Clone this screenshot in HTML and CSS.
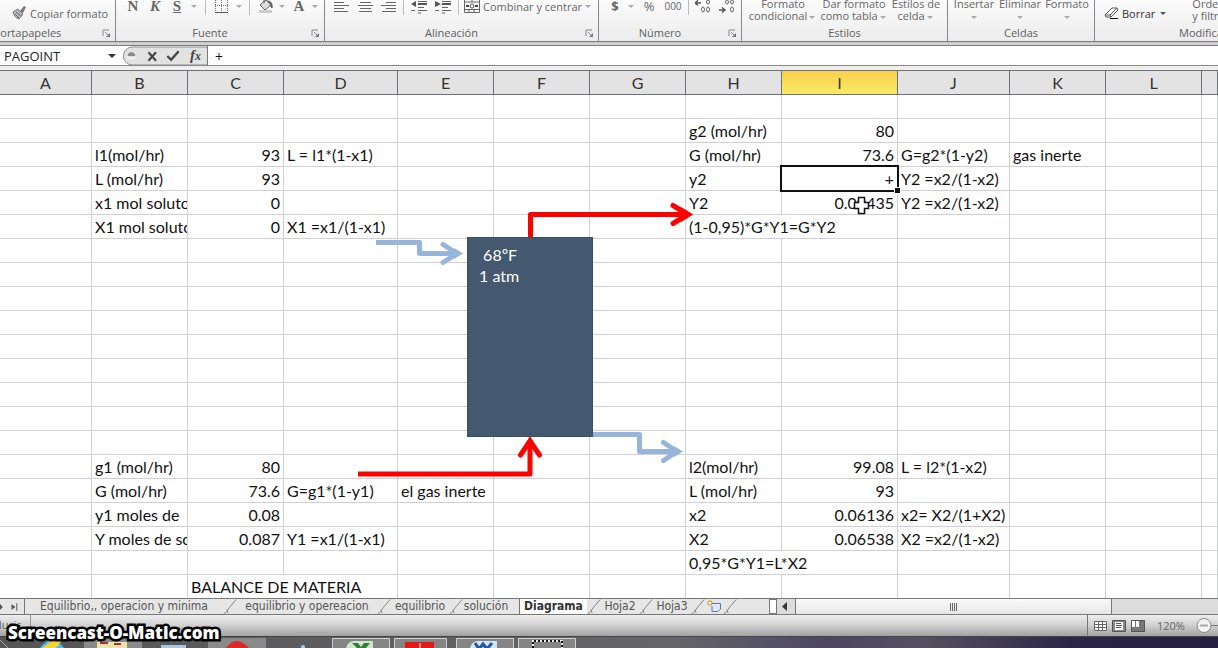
FILE: index.html
```html
<!DOCTYPE html>
<html lang="es">
<head>
<meta charset="utf-8">
<title>Balance de materia</title>
<link rel="stylesheet" href="styles.css">
</head>
<body>
<svg class="defs" aria-hidden="true">
  <defs>
    <symbol id="launcher" viewBox="0 0 9 9"><path d="M1 7V1h6" fill="none" stroke="#85888c"/><path d="M3 3l3 3" stroke="#85888c"/><path d="M8 4v4H4z" fill="#75787c"/></symbol>
    <symbol id="slash" viewBox="0 0 14 17"><path d="M0 16L14 0V16z" fill="#e6e6e6"/><path d="M0 16.500C3 16 4 13 6 10L14 .5" fill="none" stroke="#777"/><path d="M3 12l2 4" stroke="#888"/></symbol>
  </defs>
</svg>

<header class="ribbon">
  <section class="group g-clip">
    <div class="tools"><button class="wide"><svg width="16" height="16" viewBox="0 0 16 16"><path d="M9 6L13 1l2 1-3 6z" fill="#777"/><path d="M2 7l5-3 5 5-4 5C5 13 3 11 2 7z" fill="#b9b9b9" stroke="#777"/><path d="M5 7l5 4M4 9l4 4" stroke="#666"/></svg>Copiar formato</button></div>
    <h2>Portapapeles</h2><svg class="launch"><use href="#launcher"/></svg>
  </section>
  <section class="group g-font">
    <div class="tools">
      <button class="w22 serif">N</button><button class="w22 serif italic">K</button><button class="w22 serif under">S</button><i class="arrow w12"></i><i class="sep w10"></i>
      <button class="w24" aria-label="Bordes"><svg width="14" height="16" viewBox="0 0 14 16"><path d="M.5 0V14M6.500 0V14M12.500 0V14M0 1.500H14M0 7.500H14" stroke="#777" stroke-dasharray="1 1"/><path d="M0 14.500H13" stroke="#555"/></svg></button><i class="arrow w10"></i><i class="sep w10"></i>
      <button class="w24" aria-label="Relleno"><svg width="16" height="16" viewBox="0 0 16 16"><path d="M2 7l6-5 5 5-6 5z" fill="#ddd" stroke="#666"/><path d="M6 5V1M9 3q6 0 5 7l-2-3" stroke="#555" fill="#777"/><path d="M1 13.500H14" stroke="#ccc" stroke-width="3"/></svg></button><i class="arrow w8"></i>
      <button class="w26 serif">A</button><i class="arrow w6"></i>
    </div>
    <h2>Fuente</h2><svg class="launch"><use href="#launcher"/></svg>
  </section>
  <section class="group g-align">
    <div class="tools">
      <button class="w24" aria-label="Izquierda"><svg width="15" height="14" viewBox="0 0 15 14"><path d="M0 .5H15M0 3.500H10M0 6.500H15M0 9.500H10M0 12.500H14" stroke="#666"/></svg></button>
      <button class="w24" aria-label="Centro"><svg width="15" height="14" viewBox="0 0 15 14"><path d="M0 .5H15M2 3.500H13M0 6.500H15M2 9.500H13M1 12.500H14" stroke="#666"/></svg></button>
      <button class="w22" aria-label="Derecha"><svg width="15" height="14" viewBox="0 0 15 14"><path d="M0 .5H15M5 3.500H15M0 6.500H15M5 9.500H15M1 12.500H15" stroke="#666"/></svg></button><i class="sep w8"></i>
      <button class="w24" aria-label="Disminuir sangría"><svg width="16" height="15" viewBox="0 0 16 15"><path d="M7 2.500H16M7 8.500H13M0 11.500H4M7 11.500H16M7 14H10" stroke="#666"/><path d="M7 5H16" stroke="#555" stroke-width="2"/><path d="M5 2v6L0 5z" fill="#555"/></svg></button>
      <button class="w24" aria-label="Aumentar sangría"><svg width="16" height="15" viewBox="0 0 16 15"><path d="M7 2.500H16M7 8.500H13M0 11.500H4M7 11.500H16M7 14H10" stroke="#666"/><path d="M7 5H16" stroke="#555" stroke-width="2"/><path d="M0 2v6L6 5z" fill="#555"/></svg></button><i class="sep w6"></i>
      <button class="w22" aria-label="Celdas"><svg width="16" height="14" viewBox="0 0 16 14"><path d="M.5 0V13.500H15.500V0M0 3H16M0 10.500H16M8 0V3M5 11v2M10 11v2" fill="none" stroke="#666"/><path d="M2 7h3M11 7h3" stroke="#444" stroke-width="2"/><circle cx="8" cy="7" r="2" fill="none" stroke="#555"/></svg></button>
      <button class="label">Combinar y centrar</button><i class="arrow w12"></i>
    </div>
    <h2>Alineación</h2><svg class="launch"><use href="#launcher"/></svg>
  </section>
  <section class="group g-num">
    <div class="tools">
      <button class="w20 big bold">$</button><i class="arrow w12"></i><button class="w24 big">%</button><button class="w24 mil">000</button><i class="sep w6"></i>
      <button class="w24" aria-label="Aumentar decimales"><svg width="16" height="14" viewBox="0 0 16 14"><path d="M0 4H6M3 1.500L0 4l3 2.500" stroke="#555" fill="none" stroke-width="1.500"/><g fill="none" stroke="#666"><ellipse cx="13" cy="3" rx="1.500" ry="2"/><ellipse cx="8" cy="10.500" rx="1.500" ry="2.500"/><ellipse cx="13" cy="10.500" rx="1.500" ry="2.500"/></g></svg></button>
      <button class="w24" aria-label="Disminuir decimales"><svg width="16" height="14" viewBox="0 0 16 14"><path d="M0 11H6M3 8.500L6 11l-3 2.500" stroke="#555" fill="none" stroke-width="1.500"/><g fill="none" stroke="#666"><ellipse cx="8" cy="3" rx="1.500" ry="2"/><ellipse cx="13" cy="3" rx="1.500" ry="2"/><ellipse cx="13" cy="10.500" rx="1.500" ry="2.500"/></g></svg></button>
    </div>
    <h2>Número</h2><svg class="launch"><use href="#launcher"/></svg>
  </section>
  <section class="group g-style">
    <div class="tools tall">
      <button class="two w74">Formato<br>condicional<i class="arrow w10"></i></button>
      <button class="two w68">Dar formato<br>como tabla<i class="arrow w10"></i></button>
      <button class="two w56">Estilos de<br>celda<i class="arrow w10"></i></button>
    </div>
    <h2>Estilos</h2>
  </section>
  <section class="group g-cells">
    <div class="tools tall">
      <button class="two w48">Insertar<br><i class="arrow w12"></i></button>
      <button class="two w44">Eliminar<br><i class="arrow w12"></i></button>
      <button class="two w50">Formato<br><i class="arrow w12"></i></button>
    </div>
    <h2>Celdas</h2>
  </section>
  <section class="group g-edit">
    <div class="tools tall">
      <button class="wide dark"><svg width="15" height="12" viewBox="0 0 15 12"><path d="M1 8L8 1h5l1 2-7 7H2z" fill="#fff" stroke="#555"/><path d="M1 8h5l7-7M6 8l1 2" fill="none" stroke="#555"/><path d="M6 11.500h8" stroke="#111"/></svg>Borrar<i class="arrow w10 strong"></i></button>
      <button class="two left">Ordenar<br>y filtrar</button>
    </div>
    <h2>Modificar</h2>
  </section>
</header>

<div class="formula">
  <input class="name" aria-label="Cuadro de nombres" value="PAGOINT">
  <i class="arrow w12 black"></i>
  <div class="fx">
    <svg width="90" height="20" viewBox="0 0 90 20"><path d="M90 .5H11a9.500 9.500 0 000 19H90" fill="#e2e2e2" stroke="#888"/><path d="M6 10a4 4 0 018 0z" fill="#8b8b8b"/><path d="M5 11q5 4 10 0" fill="none" stroke="#fff"/><path d="M28 6l8 9M36 6l-8 9" stroke="#444" stroke-width="2.200"/><path d="M48 10l4 4 8-9" fill="none" stroke="#444" stroke-width="2.500"/></svg>
    <span class="fn">f<small>x</small></span>
  </div>
  <input class="edit" aria-label="Barra de fórmulas" value="+">
</div>

<main class="sheet">
<table>
<colgroup><col class="cA"><col class="c96"><col class="c96"><col class="cD"><col class="c96"><col class="c96"><col class="c96"><col class="c96"><col class="cI"><col class="cJ"><col class="c96"><col class="c96"><col></colgroup>
<thead><tr><th>A<th>B<th>C<th>D<th>E<th>F<th>G<th>H<th class="on">I<th>J<th>K<th>L<th></tr></thead>
<tbody>
<tr><td><td><td><td><td><td><td><td><td><td><td><td><td></tr>
<tr><td><td><td><td><td><td><td><td>g2 (mol/hr)<td class="n">80<td><td><td><td></tr>
<tr><td><td>l1(mol/hr)<td class="n">93<td>L = l1*(1-x1)<td><td><td><td>G (mol/hr)<td class="n">73.6<td>G=g2*(1-y2)<td>gas inerte<td><td></tr>
<tr><td><td>L (mol/hr)<td class="n">93<td><td><td><td><td>y2<td class="n active"><input aria-label="I4" value="+"><td>Y2 =x2/(1-x2)<td><td><td></tr>
<tr><td><td>x1 mol soluto<td class="n">0<td><td><td><td><td>Y2<td class="n">0.00435<td>Y2 =x2/(1-x2)<td><td><td></tr>
<tr><td><td>X1 mol soluto<td class="n">0<td>X1 =x1/(1-x1)<td><td><td><td colspan="2">(1-0,95)*G*Y1=G*Y2<td><td><td><td></tr>
<tr><td><td><td><td><td><td><td><td><td><td><td><td><td></tr>
<tr><td><td><td><td><td><td><td><td><td><td><td><td><td></tr>
<tr><td><td><td><td><td><td><td><td><td><td><td><td><td></tr>
<tr><td><td><td><td><td><td><td><td><td><td><td><td><td></tr>
<tr><td><td><td><td><td><td><td><td><td><td><td><td><td></tr>
<tr><td><td><td><td><td><td><td><td><td><td><td><td><td></tr>
<tr><td><td><td><td><td><td><td><td><td><td><td><td><td></tr>
<tr><td><td><td><td><td><td><td><td><td><td><td><td><td></tr>
<tr><td><td><td><td><td><td><td><td><td><td><td><td><td></tr>
<tr><td><td>g1 (mol/hr)<td class="n">80<td><td><td><td><td>l2(mol/hr)<td class="n">99.08<td>L = l2*(1-x2)<td><td><td></tr>
<tr><td><td>G (mol/hr)<td class="n">73.6<td>G=g1*(1-y1)<td>el gas inerte<td><td><td>L (mol/hr)<td class="n">93<td><td><td><td></tr>
<tr><td><td>y1 moles de<td class="n">0.08<td><td><td><td><td>x2<td class="n">0.06136<td>x2= X2/(1+X2)<td><td><td></tr>
<tr><td><td>Y moles de soluto<td class="n">0.087<td>Y1 =x1/(1-x1)<td><td><td><td>X2<td class="n">0.06538<td>X2 =x2/(1-x2)<td><td><td></tr>
<tr><td><td><td><td><td><td><td><td colspan="2">0,95*G*Y1=L*X2<td><td><td><td></tr>
<tr><td><td><td colspan="2">BALANCE DE MATERIA<td><td><td><td><td><td><td><td><td></tr>
</tbody>
</table>
<svg class="diagram" width="900" height="420" viewBox="0 70 900 420" fill="none">
  <rect x="467.500" y="237.500" width="125" height="199" fill="#44586f" stroke="#3a4d66"/>
  <g stroke="#fe0000" stroke-width="5"><path d="M530.500 237V214.500H686M358 474H530V444" stroke-linejoin="round"/><path d="M673 205.500L688 214.500L673 223.500M520.500 455L530 441L539.500 455" stroke-linecap="round"/></g>
  <path d="M681 207l12 7.500-12 7.500zM523 449l7-13 7 13z" fill="#fe0000"/>
  <g stroke="#97b4da" stroke-width="5"><path d="M376 242.500H419.500V253.500H458M593 434.500H639.500V451.500H678" stroke-linejoin="round"/><path d="M443 244.500L457 253.500L443 262.500M663.500 442.500L677 451.500L663.500 460.500" stroke-linecap="round"/></g>
  <path d="M454 248l9 5.500-9 5.500zM674 446l9 5.500-9 5.500z" fill="#97b4da"/>
  <path d="M858.500 197.500h6v5h4v6h-4v5h-6v-5h-4v-6h4z" fill="#fff" stroke="#111" stroke-width="1.500"/>
</svg>
<p class="tower">&nbsp;68ºF<br>1 atm</p>
</main>

<nav class="tabs">
  <svg class="nav" width="25" height="16" viewBox="0 0 25 16"><path d="M0 5l3 3-3 3zM12 5l4 3-4 3z" fill="#555"/><path d="M17.500 4v8" stroke="#555"/></svg>
  <button class="t1">Equilibrio,, operacion y minima</button><svg class="sl"><use href="#slash"/></svg>
  <button class="t2">equilibrio y opereacion</button><svg class="sl"><use href="#slash"/></svg>
  <button class="t3">equilibrio</button><svg class="sl"><use href="#slash"/></svg>
  <button class="t4">solución</button>
  <button class="t5 current">Diagrama</button><svg class="sl"><use href="#slash"/></svg>
  <button class="t6">Hoja2</button><svg class="sl"><use href="#slash"/></svg>
  <button class="t6">Hoja3</button><svg class="sl"><use href="#slash"/></svg>
  <button class="t7" aria-label="Insertar hoja"><svg width="16" height="14" viewBox="0 0 16 14"><path d="M5 4.500H14.500V10L12 12.500H6V7" fill="#dfe8f6" stroke="#5d78a5"/><path d="M4 1v6M1 4h6M2 2l4 4M6 2L2 6" stroke="#b98a2a"/><circle cx="4" cy="4" r="1.500" fill="#fff3b0"/></svg></button><svg class="sl"><use href="#slash"/></svg>
  <div class="scroll"><i class="split"></i><svg width="18" height="16" viewBox="0 0 18 16"><path d="M10 3v9L5 7.500z" fill="#333"/></svg><div class="thumb"><svg width="9" height="8"><path d="M1.500 0v8M3.500 0v8M5.500 0v8M7.500 0v8" stroke="#666"/></svg></div></div>
</nav>

<footer class="status">
  <span class="mode">Introducir</span>
  <div class="views">
    <svg width="52" height="14" viewBox="0 0 52 14"><path d="M.5 2.500h12v9H.500zM0 5.500h13M0 8.500h13M4.500 2v10M8.500 2v10" fill="#fff" stroke="#666"/><path d="M18.500 1.500h13v11h-13z" fill="#888" stroke="#555"/><path d="M21 3h8v8h-8z" fill="#fff"/><path d="M22 4.500h5M22 6.500h6M22 8.500h5" stroke="#555"/><path d="M37.500 1.500h13v11h-13z" fill="#777" stroke="#555"/><path d="M38 2h3v6h-3zM42 2h3v6h-3z" fill="#fff"/></svg>
    <span>120%</span>
    <svg width="26" height="18" viewBox="0 0 26 18"><path d="M15 8.500H26" stroke="#777"/><circle cx="8" cy="8.500" r="7" fill="#f3f3f3" stroke="#888"/><path d="M4 8.500h8" stroke="#aaa" stroke-width="2"/></svg>
  </div>
</footer>
<div class="taskbar">
  <svg width="640" height="11" viewBox="0 0 640 11"><path d="M0 3l8 8" stroke="#aaa"/><path d="M40 11q12-16 24 0z" fill="#53b7e8"/><path d="M42 11Q55 0 64 0q-2 4-8 11z" fill="#f2d33c"/>
  <path d="M84 1h58v10H84zM208 1h58v10h-58z" fill="#8a8a8a"/><path d="M97 5h30v6H97z" fill="#efe2ad"/><path d="M100 6h8M114 7h7" stroke="#a33" stroke-width="2"/><path d="M161 8h25v3h-25z" fill="#a9c7e0"/><path d="M226 11q10-14 23 0z" fill="#dc2a28"/><circle cx="303" cy="10" r="2" fill="#a9cde8"/>
  <g fill="#858585" stroke="#d0d0d0"><path d="M332.500 1.500h57V12h-57zM394.500 1.500h52V12h-52zM456.500 1.500h57V12h-57zM518.500 1.500h57V12h-57z"/></g>
  <path d="M346 11q2-7 8-7h19v7z" fill="#cfe6cd"/><path d="M352 6h6l3 4 3-4h6l-4 5h-9z" fill="#387b3d"/><path d="M405 5h29v6h-29z" fill="#e01818"/><path d="M420 6v5" stroke="#fff"/><path d="M470 11q2-7 8-7h19v7z" fill="#d5e4f6"/><path d="M475 6l4 6 4-5 4 5 5-6" fill="none" stroke="#2158a8" stroke-width="3"/><path d="M533 11V4h29v7" fill="none" stroke="#eee" stroke-width="2"/><path d="M533 11V4h29v7" fill="none" stroke="#111" stroke-width="2" stroke-dasharray="2 2"/></svg>
</div>
<div class="watermark">Screencast-O-Matic.com</div>
</body>
</html>
```

FILE: styles.css
```css
* { box-sizing: border-box; }
body {
  margin: 0;
  height: 100vh;
  display: flex;
  flex-direction: column;
  overflow: hidden;
  background: #fff;
  font-family: "Open Sans", "Noto Sans", sans-serif;
  font-size: 11px;
  color: #666;
}
.defs { position: absolute; width: 0; height: 0; }
button {
  border: 0;
  padding: 0;
  background: none;
  font: inherit;
  color: inherit;
  white-space: nowrap;
}
input { border: 0; padding: 0; outline: 0; min-width: 0; background: none; }

.ribbon {
  display: flex;
  flex: none;
  height: 46px;
  overflow: hidden;
  background: linear-gradient(#fbfbfb, #ececec 41px, #77797c 41px, #77797c 42px, #c8c8c8 42px, #d6d6d6 45px, #77797c 45px);
}
.group { position: relative; flex: none; height: 41px; border-right: 1px solid #85878a; }
.group h2 { margin: 0; font-size: 11px; font-weight: 400; line-height: 22px; text-align: center; color: #606060; white-space: nowrap; }
.tools { display: flex; align-items: center; height: 22px; padding-bottom: 10px; }
.tools button { display: flex; align-items: center; justify-content: center; height: 16px; flex: none; }
.tools .label { justify-content: flex-start; }
.launch { position: absolute; right: 4px; bottom: 3px; width: 9px; height: 9px; }
.g-clip { width: 116px; }
.g-clip h2 { margin-right: 60px; display: flex; justify-content: center; }
.g-clip .tools { padding: 4px 0 0 11px; }
.tools .wide { gap: 3px; }
.g-font { width: 209px; }
.g-font .tools { padding-left: 6px; }
.g-font h2 { padding-right: 20px; }
.g-align { width: 274px; }
.g-align .tools { padding-left: 4px; }
.g-align h2 { padding-right: 20px; }
.g-num { width: 143px; }
.g-num .tools { padding-left: 6px; }
.g-num h2 { padding-right: 20px; }
.g-style { width: 206px; }
.g-cells { width: 147px; }
.g-edit { flex: 1; min-width: 0; border: 0; overflow: hidden; }
.tools.tall { align-items: flex-end; padding: 0 4px 0 2px; }
.g-style .tools.tall { padding-left: 4px; }
.g-edit .tools.tall { padding-left: 9px; gap: 24px; }
.g-edit h2 { text-align: left; padding-left: 84px; }
.tools .two { display: block; height: 24px; line-height: 12px; text-align: center; }
.tools .left { text-align: left; }
.dark { color: #333; }
.tools .dark { height: 18px; }
.serif { font-family: "Liberation Serif", serif; font-size: 15px; font-weight: 700; }
.italic { font-style: italic; }
.under { text-decoration: underline; }
.big { font-size: 13px; }
.bold { font-weight: 700; }
.mil { font-size: 10px; }
.arrow { display: inline-flex; flex: none; justify-content: center; }
.arrow::after { content: ""; border: 3px solid transparent; border-top-color: #aaa; border-bottom: 0; }
.strong::after { border-top-color: #555; }
.black::after { border-width: 4px; border-bottom: 0; border-top-color: #333; }
.two .arrow { vertical-align: middle; }
.sep { flex: none; display: flex; justify-content: center; align-self: stretch; }
.sep::after { content: ""; width: 1px; height: 15px; background: #bbb; }
.w6 { width: 6px; } .w8 { width: 8px; } .w10 { width: 10px; } .w12 { width: 12px; }
.w20 { width: 20px; } .w22 { width: 22px; } .w24 { width: 24px; } .w26 { width: 26px; }
.w44 { width: 44px; } .w48 { width: 48px; } .w50 { width: 50px; } .w56 { width: 56px; }
.w68 { width: 68px; } .w74 { width: 74px; }

.formula { display: flex; flex: none; align-items: center; height: 24px; background: #fff; border-bottom: 4px solid #eee; box-shadow: inset 0 -1px #888; }
.name { width: 106px; padding-left: 4px; font: 13px "Open Sans", sans-serif; color: #222; }
.fx { position: relative; display: flex; margin-left: 4px; width: 86px; border-right: 1px solid #777; }
.fn { position: absolute; right: 6px; top: 0; font: italic bold 15px/18px "Liberation Serif", serif; color: #444; }
.fn small { font-size: 12px; }
.edit { flex: 1; padding-left: 7px; font: 14px "Open Sans", sans-serif; color: #111; }

.sheet { position: relative; flex: 1; min-height: 0; overflow: hidden; }
table {
  width: 100%;
  min-width: 1202px;
  table-layout: fixed;
  border-collapse: separate;
  border-spacing: 0;
  font: 16px "Lato", sans-serif;
  color: #111;
}
.cA { width: 92px; } .c96 { width: 96px; } .cD { width: 114px; } .cI { width: 116px; } .cJ { width: 112px; }
th {
  height: 25px;
  padding: 0;
  font-weight: 400;
  line-height: 23px;
  color: #333;
  background: #e3e3e3;
  border: solid #6d7075;
  border-width: 1px 1px 1px 0;
}
th.on { background: linear-gradient(#fbd04d, #f8ea66); }
td {
  height: 24px;
  padding: 0 0 0 3px;
  line-height: 23px;
  white-space: nowrap;
  overflow: hidden;
  border: solid #cfd0d2;
  border-width: 0 1px 1px 0;
}
.n { text-align: right; padding: 0 3px 0 0; }
.active { position: relative; overflow: visible; }
.active input {
  position: absolute;
  inset: -2px;
  width: 119px;
  padding: 0 3px 0 0;
  border: 2px solid #111;
  text-align: right;
  font: inherit;
  color: inherit;
}
.active::after {
  content: "";
  position: absolute;
  right: -3px;
  bottom: -3px;
  width: 5px;
  height: 5px;
  background: #111;
  outline: 1px solid #fff;
}
.diagram { position: absolute; left: 0; top: 0; }
.tower { position: absolute; left: 479px; top: 174px; margin: 0; font: 16px/21px "Lato", sans-serif; color: #fff; }

.tabs {
  display: flex;
  flex: none;
  height: 17px;
  background: #e6e6e6;
  border-top: 1px solid #777;
  border-bottom: 1px solid #777;
  font: 12px/15px "DejaVu Sans Condensed", "DejaVu Sans", sans-serif;
}
.tabs > * { flex: none; }
.tabs button { text-align: center; color: #555; }
.tabs .nav { border-right: 1px solid #777; }
.sl { width: 14px; height: 15px; }
.t1 { width: 198px; } .t2 { width: 140px; } .t3 { width: 58px; } .t4 { width: 56px; } .t5 { width: 68px; }
.t6 { width: 38px; } .t7 { width: 18px; }
.tabs .t4 { padding-right: 10px; }
.tabs .current { background: #fff; border-left: 1px solid #777; font-weight: 700; color: #333; }
.tabs .scroll { display: flex; flex: 1; margin-left: 32px; background: #dcdcdc; }
.split { width: 8px; border: 1px solid #777; background: #fff; }
.thumb {
  display: flex;
  align-items: center;
  justify-content: center;
  width: 75%;
  max-width: 317px;
  border: solid #777;
  border-width: 0 1px;
  background: linear-gradient(#fafafa, #e6e6e6);
}

.status { display: flex; flex: none; height: 22px; justify-content: space-between; background: linear-gradient(#eee, #cfcfcf 50%, #a2a2a2); border-bottom: 1px solid #444; }
.mode { display: flex; justify-content: flex-end; width: 31px; padding-right: 9px; line-height: 20px; border-right: 1px solid #999; overflow: hidden; }
.views { display: flex; align-items: center; gap: 11px; width: 131px; padding-left: 6px; border-left: 1px solid #777; }
.views span { width: 28px; white-space: nowrap; }
.views svg { flex: none; }
.taskbar { flex: none; height: 11px; overflow: hidden; background: linear-gradient(90deg, #555 0, #66666a 55%, #4c4663 68%, #55505f 76%, #2b2648 88%, #25203f); }
.taskbar svg { display: block; }
.watermark {
  position: absolute;
  left: 8px;
  bottom: 4px;
  font: 800 17px/22px "Open Sans", sans-serif;
  color: #fff;
  -webkit-text-stroke: 5px #000;
  paint-order: stroke fill;
}
```
